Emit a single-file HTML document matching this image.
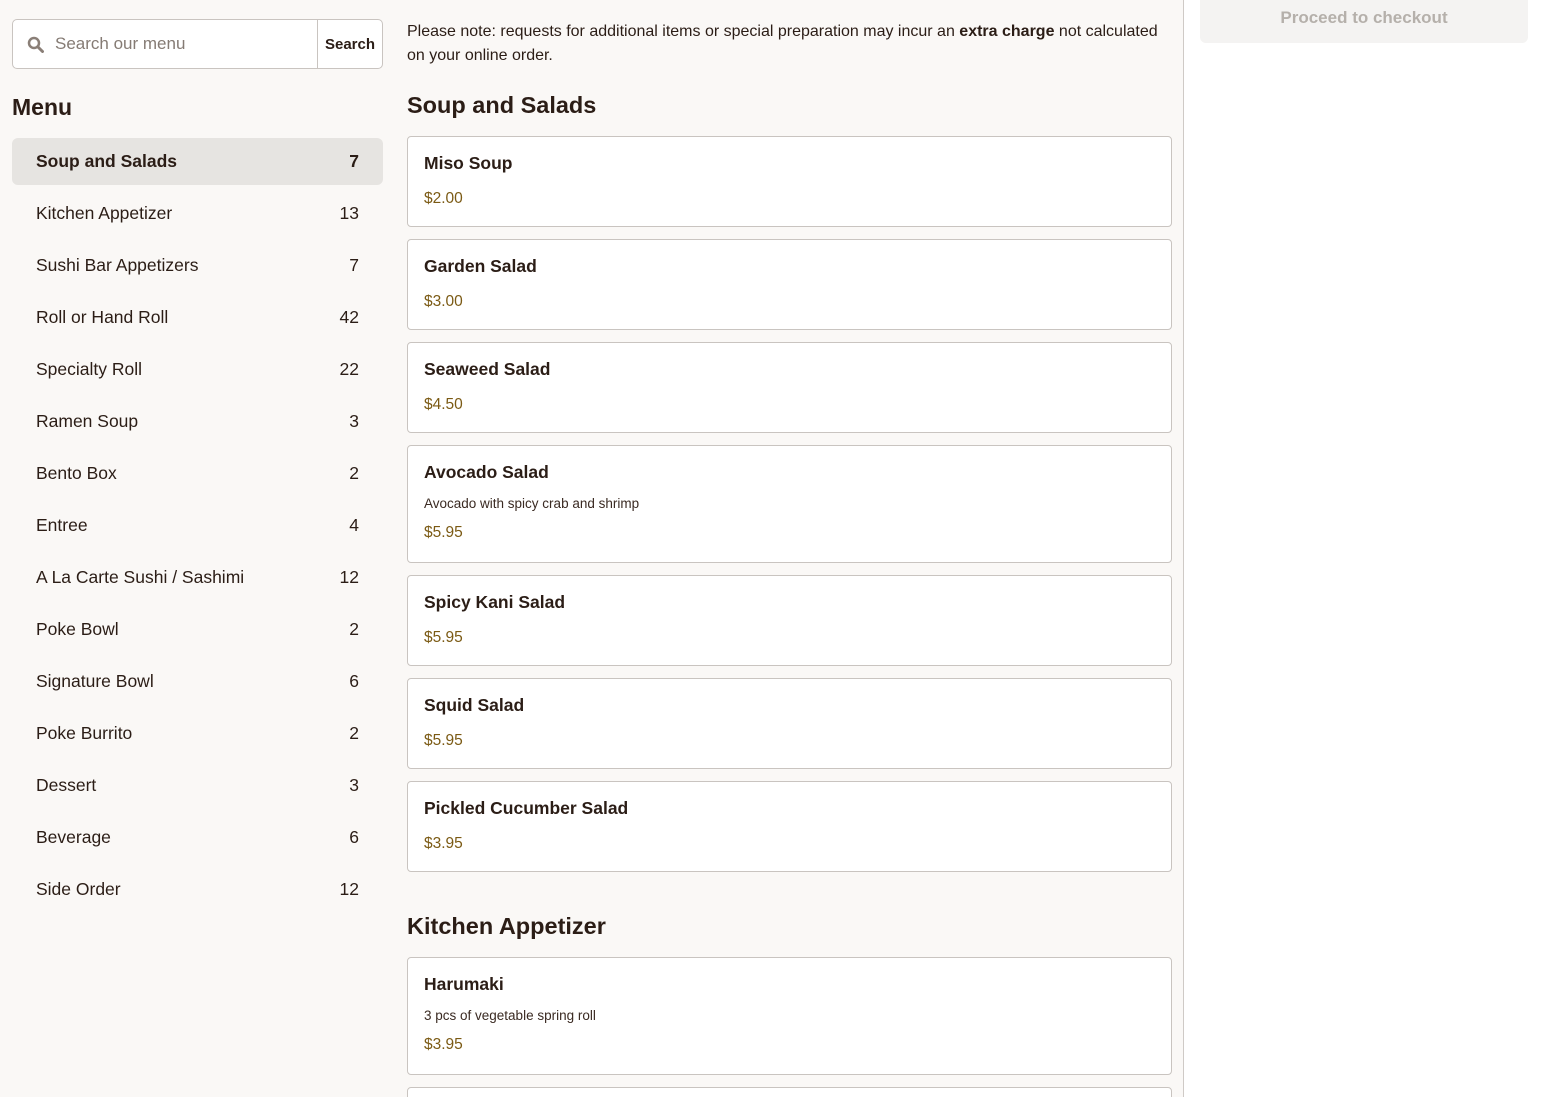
<!DOCTYPE html>
<html style="overflow:hidden;height:1097px"><head><meta charset="utf-8"><style>
*{box-sizing:border-box;margin:0;padding:0}
body{width:1544px;height:1097px;overflow:hidden;background:#faf8f6;font-family:"Liberation Sans",sans-serif;color:#2b1d16;position:relative}
.search{position:absolute;left:12px;top:19px;width:371px;height:50px;border:1px solid #c9c4c0;border-radius:5px;background:#fff;display:flex}
.search .in{flex:1;display:flex;align-items:center;padding-left:14px;font-size:17px;color:#857b74}
.search .in svg{margin-right:11px}
.search .btn{width:65px;border-left:1px solid #c9c4c0;display:flex;align-items:center;justify-content:center;font-weight:bold;font-size:15px}
h2.menu{position:absolute;left:12px;top:94px;font-size:23px;font-weight:bold}
.nav{position:absolute;left:12px;top:138px;width:371px}
.nav div{height:52px;display:flex;justify-content:space-between;align-items:center;padding:0 24px;font-size:17.5px;color:#2b1d16}
.nav div.act{background:#e6e4e1;border-radius:6px;height:47px;margin-bottom:2px;font-weight:bold}
.main{position:absolute;left:407px;top:0;width:765px;height:1097px;overflow:hidden}
.note{position:absolute;top:20px;font-size:16px;line-height:24px;width:765px}
.sec{position:absolute;font-size:23.5px;font-weight:bold}
.card{position:absolute;left:0;width:765px;background:#fff;border:1px solid #c9c4c0;border-radius:4px;padding:16px 16px}
.card .t{font-size:17.5px;font-weight:bold;line-height:21px}
.card .d{font-size:13.5px;margin-top:13px;color:#3a2a22}
.card .p{font-size:15.5px;color:#7b5a14;margin-top:16px}
.card .d+.p{margin-top:13px}
.divider{position:absolute;left:1183px;top:0;width:1px;height:1097px;background:#cfcac6}
.right{position:absolute;left:1184px;top:0;width:360px;height:1097px;background:#fff}
.chk{position:absolute;left:1200px;top:-10px;width:328px;height:53px;background:#f4f3f2;border-radius:6px;display:flex;align-items:flex-end;justify-content:center;padding-bottom:15px;font-weight:bold;font-size:17px;color:#b5b0ab}
</style></head><body>
<div class="right"></div>
<div class="divider"></div>
<div class="chk">Proceed to checkout</div>
<div class="search"><div class="in"><svg width="17" height="17" viewBox="0 0 17 17"><circle cx="7" cy="7" r="5" stroke="#8a7f77" stroke-width="2.5" fill="none"/><path d="M11 11 L15.5 15.5" stroke="#8a7f77" stroke-width="3" stroke-linecap="round"/></svg>Search our menu</div><div class="btn">Search</div></div>
<h2 class="menu">Menu</h2>
<div class="nav">
<div class="act"><span>Soup and Salads</span><span>7</span></div>
<div><span>Kitchen Appetizer</span><span>13</span></div>
<div><span>Sushi Bar Appetizers</span><span>7</span></div>
<div><span>Roll or Hand Roll</span><span>42</span></div>
<div><span>Specialty Roll</span><span>22</span></div>
<div><span>Ramen Soup</span><span>3</span></div>
<div><span>Bento Box</span><span>2</span></div>
<div><span>Entree</span><span>4</span></div>
<div><span>A La Carte Sushi / Sashimi</span><span>12</span></div>
<div><span>Poke Bowl</span><span>2</span></div>
<div><span>Signature Bowl</span><span>6</span></div>
<div><span>Poke Burrito</span><span>2</span></div>
<div><span>Dessert</span><span>3</span></div>
<div><span>Beverage</span><span>6</span></div>
<div><span>Side Order</span><span>12</span></div>
</div>
<div class="main">
<div class="note">Please note: requests for additional items or special preparation may incur an <b>extra charge</b> not calculated on your online order.</div>
<div class="sec" style="top:92px">Soup and Salads</div>
<div class="card" style="top:136px;height:91px"><div class="t">Miso Soup</div><div class="p">$2.00</div></div>
<div class="card" style="top:239px;height:91px"><div class="t">Garden Salad</div><div class="p">$3.00</div></div>
<div class="card" style="top:342px;height:91px"><div class="t">Seaweed Salad</div><div class="p">$4.50</div></div>
<div class="card" style="top:445px;height:118px"><div class="t">Avocado Salad</div><div class="d">Avocado with spicy crab and shrimp</div><div class="p">$5.95</div></div>
<div class="card" style="top:575px;height:91px"><div class="t">Spicy Kani Salad</div><div class="p">$5.95</div></div>
<div class="card" style="top:678px;height:91px"><div class="t">Squid Salad</div><div class="p">$5.95</div></div>
<div class="card" style="top:781px;height:91px"><div class="t">Pickled Cucumber Salad</div><div class="p">$3.95</div></div>
<div class="sec" style="top:913px">Kitchen Appetizer</div>
<div class="card" style="top:957px;height:118px"><div class="t">Harumaki</div><div class="d">3 pcs of vegetable spring roll</div><div class="p">$3.95</div></div>
<div class="card" style="top:1087px;height:91px"></div>
</div>
</body></html>
